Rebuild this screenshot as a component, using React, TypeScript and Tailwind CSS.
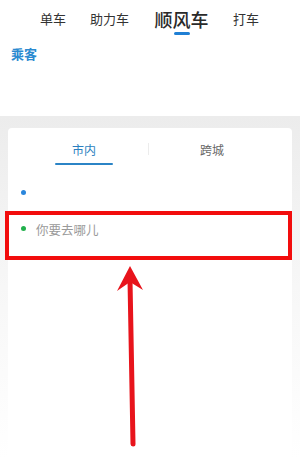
import React from "react";

export default function App() {
  return (
    <div
      className="relative w-[300px] h-[458px] overflow-hidden bg-white"
      style={{ fontFamily: '"Noto Sans CJK SC", "Noto Sans", sans-serif' }}
    >
      {/* Header */}
      <div className="h-[116px] bg-white flex flex-col">
        <div className="flex items-start pt-[8px] pl-[40px] text-[#333]">
          <div className="text-[13px] leading-[22px] w-[26px]">单车</div>
          <div className="text-[13px] leading-[22px] ml-[24px] w-[39px]">助力车</div>
          <div className="ml-[25px] flex flex-col items-center w-[55px]">
            <div className="text-[18px] leading-[22px] font-medium text-[#2a2a2a]">顺风车</div>
            <div className="mt-[2px] h-[3px] w-[16px] bg-[#1f7fd4] rounded-full" />
          </div>
          <div className="text-[13px] leading-[22px] ml-[24px]">打车</div>
        </div>
        <div className="mt-[10px] pl-[11px] text-[13px] leading-[18px] font-bold text-[#2b8ad0]">乘客</div>
      </div>

      {/* Body */}
      <div className="bg-gradient-to-b from-[#ececec] via-[#f7f7f7] to-white pt-[12px] h-[342px]">
        <div className="mx-[8px] bg-white rounded-t-[4px] h-full flex flex-col">
          <div className="flex items-start pt-[14px]">
            <div className="ml-[47px] w-[58px] flex flex-col items-center">
              <div className="text-[12px] leading-[16px] text-[#2b7fc0]">市内</div>
              <div className="mt-[5px] h-[2px] w-full bg-[#2b84c6] rounded-full" />
            </div>
            <div className="ml-[35px] mt-[1px] h-[12px] w-px bg-[#ececec]" />
            <div className="ml-[51px] text-[12px] leading-[16px] text-[#666]">跨城</div>
          </div>
          <div className="mt-[9px] h-[36px] flex items-center pl-[13px]">
            <div className="w-[5px] h-[5px] rounded-full bg-[#2a86dc]" />
          </div>
          <div className="h-[40px] flex items-center pl-[13px]">
            <div className="w-[5px] h-[5px] rounded-full bg-[#22b04c] -mt-[3px]" />
            <div className="ml-[10px] text-[12.5px] leading-[16px] text-[#9a9a9a]">你要去哪儿</div>
          </div>
        </div>
      </div>

      {/* Annotation: red box */}
      <div className="absolute left-[5px] top-[211px] w-[287px] h-[49px] border-[4px] border-[#f20d0d]" />

      {/* Annotation: arrow */}
      <svg className="absolute left-0 top-0" width="300" height="458" viewBox="0 0 300 458">
        <line x1="133" y1="444" x2="130" y2="280" stroke="#e8141c" strokeWidth="5" strokeLinecap="round" />
        <polygon points="130,266 117,291 130,282 143,290" fill="#e8141c" />
      </svg>
    </div>
  );
}
